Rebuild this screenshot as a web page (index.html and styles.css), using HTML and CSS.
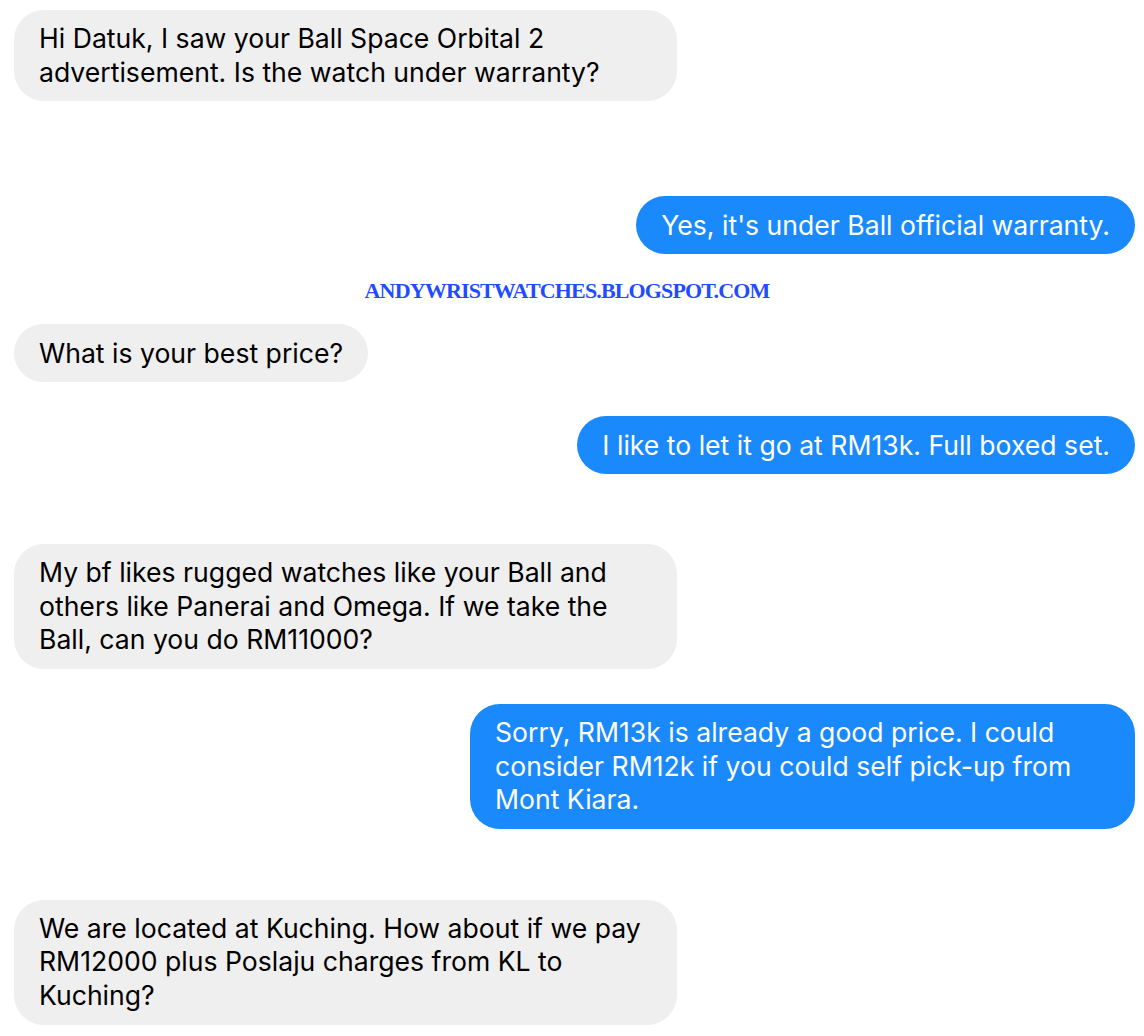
FILE: index.html
```html
<!DOCTYPE html>
<html>
<head>
<meta charset="utf-8">
<link rel="stylesheet" href="styles.css">
</head>
<body>
<div class="chat">
  <div class="row in"><div class="bubble wide">Hi Datuk, I saw your Ball Space Orbital 2<br>advertisement. Is the watch under warranty?</div></div>
  <div class="row out gap-95"><div class="bubble">Yes, it's under Ball official warranty.</div></div>
  <div class="watermark">ANDYWRISTWATCHES.BLOGSPOT.COM</div>
  <div class="row in gap-24"><div class="bubble">What is your best price?</div></div>
  <div class="row out gap-34"><div class="bubble">I like to let it go at RM13k. Full boxed set.</div></div>
  <div class="row in gap-70"><div class="bubble wide">My bf likes rugged watches like your Ball and<br>others like Panerai and Omega. If we take the<br>Ball, can you do RM11000?</div></div>
  <div class="row out gap-35"><div class="bubble wide">Sorry, RM13k is already a good price. I could<br>consider RM12k if you could self pick-up from<br>Mont Kiara.</div></div>
  <div class="row in gap-71"><div class="bubble wide">We are located at Kuching. How about if we pay<br>RM12000 plus Poslaju charges from KL to<br>Kuching?</div></div>
</div>
</body>
</html>
```
FILE: styles.css
```css
html, body {
  margin: 0;
  padding: 0;
  background: #ffffff;
}
.chat {
  width: 1144px;
  box-sizing: border-box;
  padding: 10px 9px 0 14px;
  display: flex;
  flex-direction: column;
  font-family: Inter, "Liberation Sans", Arial, sans-serif;
}
.row {
  display: flex;
}
.row.in { justify-content: flex-start; }
.row.out { justify-content: flex-end; }
.bubble {
  font-size: 26.6px;
  line-height: 34px;
  padding: 12px 25px;
  border-radius: 30px;
  white-space: nowrap;
  box-sizing: border-box;
}
.in .bubble {
  background: #efefef;
  color: #000;
}
.out .bubble {
  background: #1a89fc;
  color: #fff;
}
.bubble.wide { line-height: 33.6px; }
.in .bubble.wide { width: 663px; }
.out .bubble.wide { width: 665px; }
.gap-95 { margin-top: 95px; }
.gap-24 { margin-top: 24px; }
.gap-34 { margin-top: 34px; }
.gap-35 { margin-top: 35px; }
.gap-70 { margin-top: 70px; }
.gap-71 { margin-top: 71px; }
.watermark {
  margin-top: 28px;
  margin-bottom: 0;
  align-self: center;
  margin-left: -15px;
  font-family: "Liberation Serif", serif;
  font-weight: bold;
  font-size: 22px;
  line-height: 18px;
  color: #1f4cff;
  letter-spacing: -0.85px;
}
```
